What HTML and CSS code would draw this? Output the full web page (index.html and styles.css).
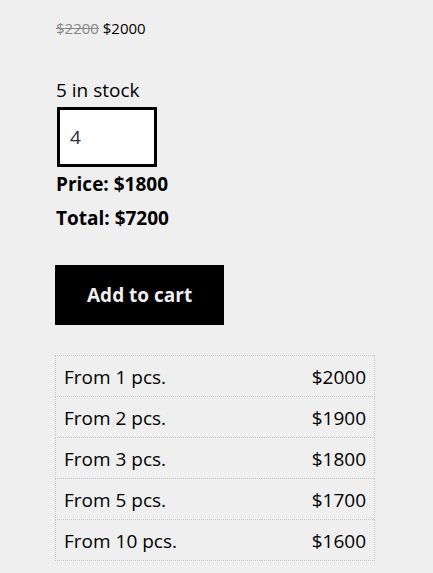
FILE: index.html
```html
<!DOCTYPE html>
<html lang="en">
<head>
<meta charset="utf-8">
<meta name="viewport" content="width=device-width, initial-scale=1">
<title>Product</title>
<link rel="stylesheet" href="styles.css">
</head>
<body>
<main class="product">
  <p class="prices"><del class="old-price">$2200</del> <span>$2000</span></p>
  <form class="cart">
    <label class="stock" for="qty">5 in stock</label>
    <input class="qty" id="qty" type="text" inputmode="numeric" value="4">
    <p class="sum">Price: $1800</p>
    <p class="sum">Total: $7200</p>
    <button class="add" type="button">Add to cart</button>
  </form>
  <table class="tiers">
    <tbody>
      <tr><th scope="row">From 1 pcs.</th><td>$2000</td></tr>
      <tr><th scope="row">From 2 pcs.</th><td>$1900</td></tr>
      <tr><th scope="row">From 3 pcs.</th><td>$1800</td></tr>
      <tr><th scope="row">From 5 pcs.</th><td>$1700</td></tr>
      <tr><th scope="row">From 10 pcs.</th><td>$1600</td></tr>
    </tbody>
  </table>
</main>
</body>
</html>
```
FILE: styles.css
```css
* {
  box-sizing: border-box;
}

body {
  margin: 0;
  background: #efefef;
  color: #000;
  font-family: "Open Sans", "Noto Sans", sans-serif;
  font-size: 19px;
  line-height: 34px;
}

.product {
  padding: 11px 58px 12px 55px;
}

.prices {
  margin: 0 0 28px;
  padding-left: 1px;
  font-size: 15px;
}

.old-price {
  color: #888;
}

.cart {
  display: flex;
  flex-direction: column;
  align-items: flex-start;
  margin-bottom: 30px;
}

.stock,
.sum {
  padding-left: 1px;
}

.qty {
  width: 100px;
  height: 60px;
  margin: 0 2px;
  padding: 0 10px;
  border: 3px solid #000;
  border-radius: 0;
  background: #fff;
  color: #28303d;
  font: inherit;
}

.sum {
  margin: 0;
  font-weight: 700;
}

.add {
  height: 60px;
  margin-top: 30px;
  padding: 0 32px;
  border: 0;
  background: #000;
  color: #efefef;
  font: inherit;
  font-weight: 700;
}

.tiers {
  width: 100%;
  border-collapse: collapse;
}

.tiers th,
.tiers td {
  height: 41px;
  padding: 1px 8px 0;
  border: 0 dotted #c8c8c8;
  border-width: 1px 0;
  font-weight: 400;
  text-align: left;
}

.tiers th {
  border-left-width: 1px;
}

.tiers td {
  border-right-width: 1px;
  text-align: right;
}
```
